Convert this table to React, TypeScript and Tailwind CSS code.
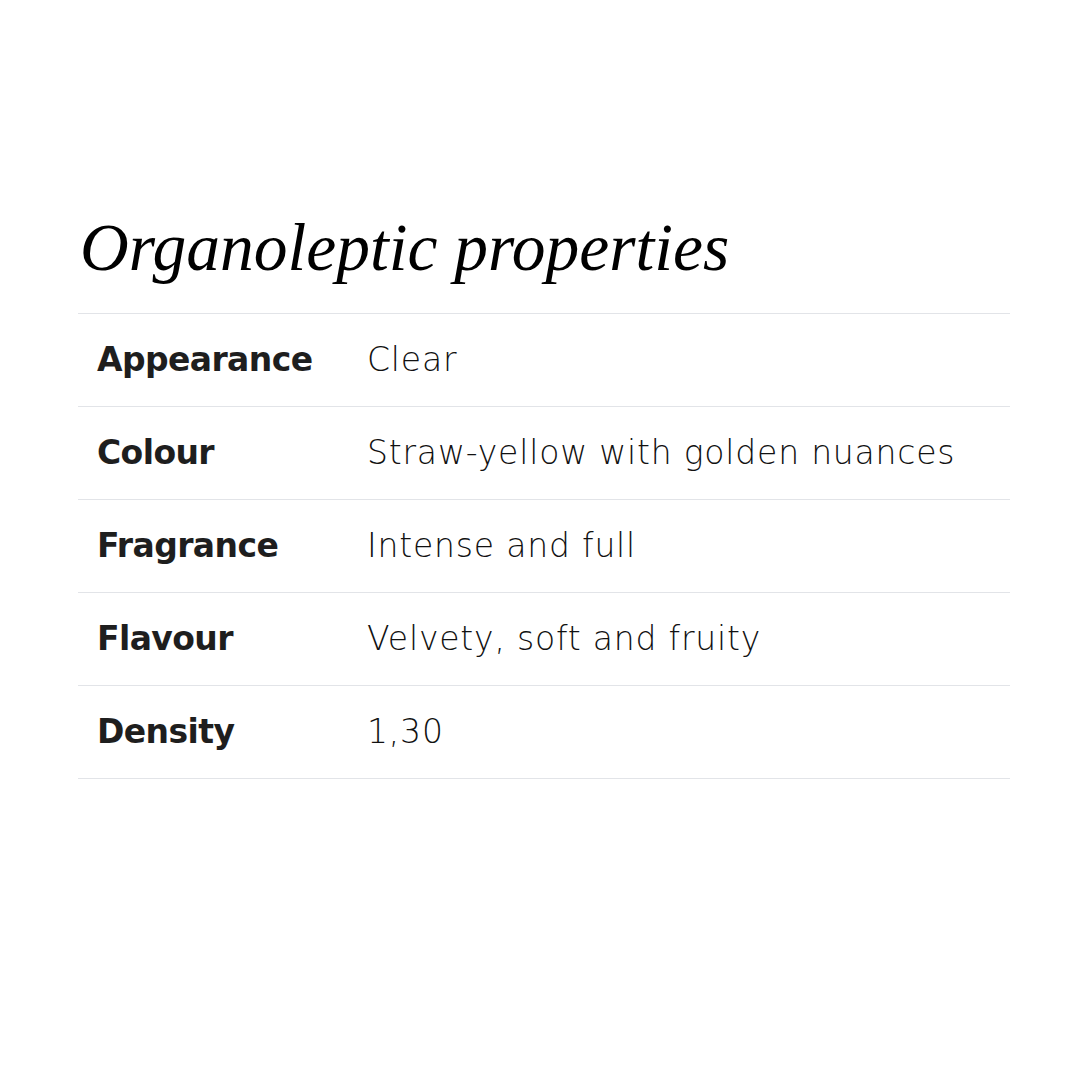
export default function App() {
  const rows: [string, string][] = [
    ["Appearance", "Clear"],
    ["Colour", "Straw-yellow with golden nuances"],
    ["Fragrance", "Intense and full"],
    ["Flavour", "Velvety, soft and fruity"],
    ["Density", "1,30"],
  ];
  return (
    <div className="w-[1080px] h-[1080px] bg-white">
      <div className="ml-[78px] w-[932px] pt-[208px]">
        <h2
          className="text-[67.5px] italic leading-[80px] text-black pl-[2px] pb-[25px]"
          style={{ fontFamily: '"Liberation Serif", serif' }}
        >
          Organoleptic properties
        </h2>
        <div className="border-t border-[#e2e4e8]">
          {rows.map(([k, v]) => (
            <div
              key={k}
              className="flex items-center h-[93px] border-b border-[#e2e4e8]"
              style={{ fontFamily: '"DejaVu Sans", sans-serif' }}
            >
              <div className="w-[289px] pl-[19px] text-[33px] font-bold tracking-[-0.6px] text-[#1e1e1e]">{k}</div>
              <div className="text-[33px] font-extralight tracking-[0.8px] text-[#111111]">{v}</div>
            </div>
          ))}
        </div>
      </div>
    </div>
  );
}
